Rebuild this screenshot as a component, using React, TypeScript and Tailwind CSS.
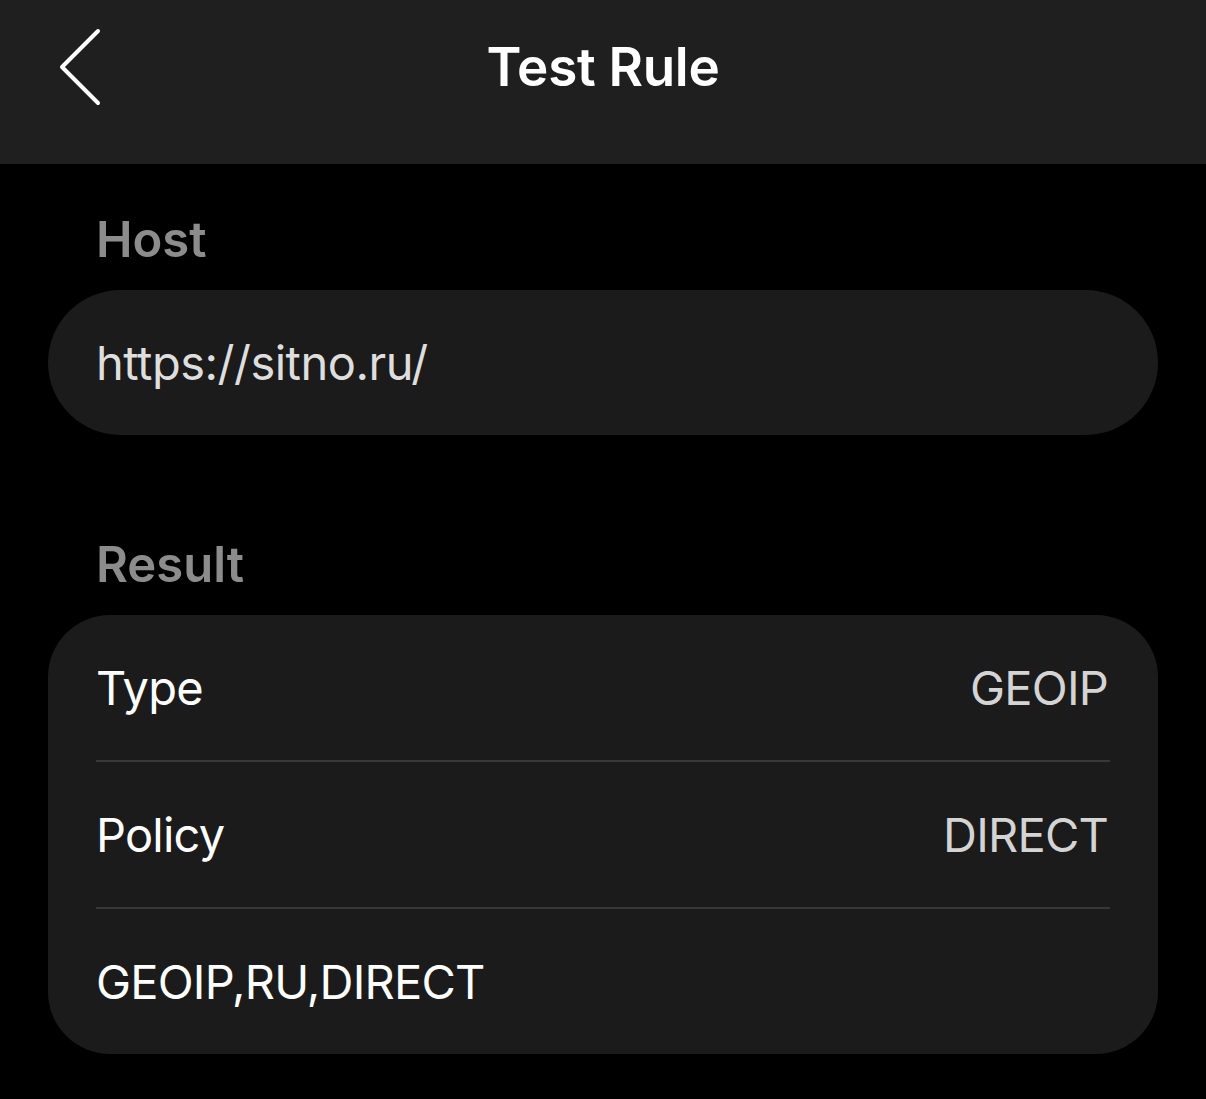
const rows = [
  { label: 'Type', value: 'GEOIP' },
  { label: 'Policy', value: 'DIRECT' },
  { label: 'GEOIP,RU,DIRECT', value: '' },
];

function BackChevron() {
  return (
    <svg width="46" height="80" viewBox="0 0 46 80" fill="none">
      <path d="M41 4 L5 40 L41 76" stroke="#ffffff" strokeWidth="4" strokeLinecap="round" strokeLinejoin="round" />
    </svg>
  );
}

export default function App() {
  return (
    <div className="min-h-[1099px] bg-black text-white font-['Inter','Liberation_Sans',sans-serif]">
      {/* nav bar */}
      <div className="h-[164px] bg-[#1f1f1f]">
        <div className="grid grid-cols-[1fr_auto_1fr] items-center h-[134px] px-[57px]">
          <button className="justify-self-start">
            <BackChevron />
          </button>
          <h1 className="text-[53px] leading-none font-semibold tracking-[-0.3px]">Test Rule</h1>
          <div />
        </div>
      </div>

      <div className="px-[48px]">
        <div className="pl-[48px] pt-[51px] text-[49px] leading-none font-semibold text-[#8c8c8c]">Host</div>
        <div className="mt-[26px] h-[145px] rounded-full bg-[#1b1b1b] flex items-center pl-[48px]">
          <span className="text-[47px] leading-none tracking-[-0.5px] text-[#dedede]">https://sitno.ru/</span>
        </div>

        <div className="pl-[48px] mt-[105px] text-[49px] leading-none font-semibold text-[#8c8c8c]">Result</div>
        <div className="mt-[26px] rounded-[62px] bg-[#1b1b1b] overflow-hidden">
          {rows.map((r, i) => (
            <div key={r.label}>
              {i > 0 && <div className="mx-[48px] h-[2px] bg-[#383838]" />}
              <div className="h-[145px] flex items-center justify-between pl-[48px] pr-[50px] text-[47px] leading-none tracking-[-0.8px]">
                <span className="text-white">{r.label}</span>
                {r.value && <span className="text-[#d4d4d4]">{r.value}</span>}
              </div>
            </div>
          ))}
        </div>
      </div>
    </div>
  );
}
